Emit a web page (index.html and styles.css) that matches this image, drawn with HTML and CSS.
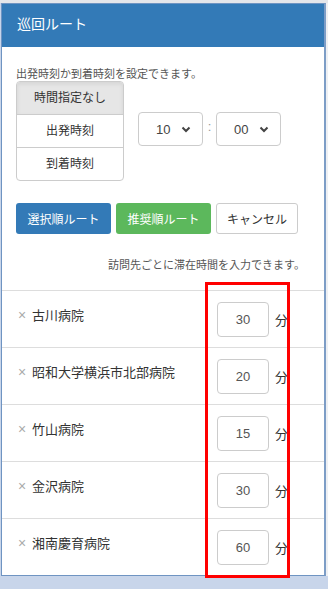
FILE: index.html
```html
<!DOCTYPE html>
<html lang="ja">
<head>
  <meta charset="UTF-8">
  <meta name="viewport" content="width=device-width, initial-scale=1.0">
  <title>巡回ルート</title>
  <link rel="stylesheet" href="styles.css">
</head>
<body>
  <div class="pantalla">
    <div class="panel">
      <div class="cabecera">巡回ルート</div>
      <div class="cuerpo">
        <p class="ayuda">出発時刻か到着時刻を設定できます。</p>
        <div class="fila-hora">
          <div class="grupo">
            <div class="opcion activa">時間指定なし</div>
            <div class="opcion">出発時刻</div>
            <div class="opcion">到着時刻</div>
          </div>
          <div class="selector">
            <span>10</span>
            <svg width="10" height="7" viewBox="0 0 10 7"><path d="M1.5 1.5 L5 5 L8.5 1.5" fill="none" stroke="#444" stroke-width="2"/></svg>
          </div>
          <span class="dos-puntos">:</span>
          <div class="selector">
            <span>00</span>
            <svg width="10" height="7" viewBox="0 0 10 7"><path d="M1.5 1.5 L5 5 L8.5 1.5" fill="none" stroke="#444" stroke-width="2"/></svg>
          </div>
        </div>
        <div class="botones">
          <button class="azul">選択順ルート</button>
          <button class="verde">推奨順ルート</button>
          <button class="blanco">キャンセル</button>
        </div>
        <p class="nota">訪問先ごとに滞在時間を入力できます。</p>
      </div>
      <ul class="lista">
        <li><span class="nombre"><span class="quitar">×</span>古川病院</span><span class="caja">30</span><span class="min">分</span></li>
        <li><span class="nombre"><span class="quitar">×</span>昭和大学横浜市北部病院</span><span class="caja">20</span><span class="min">分</span></li>
        <li><span class="nombre"><span class="quitar">×</span>竹山病院</span><span class="caja">15</span><span class="min">分</span></li>
        <li><span class="nombre"><span class="quitar">×</span>金沢病院</span><span class="caja">30</span><span class="min">分</span></li>
        <li><span class="nombre"><span class="quitar">×</span>湘南慶育病院</span><span class="caja">60</span><span class="min">分</span></li>
      </ul>
    </div>
    <div class="marco-rojo"></div>
  </div>
</body>
</html>
```

FILE: styles.css
```css
body {
  margin: 0;
  font-family: "Liberation Sans", "Noto Sans CJK JP", sans-serif;
  background: #c8d5ea;
}
.pantalla {
  position: relative;
  width: 328px;
  height: 589px;
  overflow: hidden;
  background: linear-gradient(to bottom, #e4e6ea 0, #e4e6ea 3px, #c8d5ea 3px);
}
.panel {
  margin: 3px 0 0 1px;
  width: 322px;
  background: #fff;
  border: 1px solid #6f94c2;
  border-right: 2px solid #7d9dc6;
  box-shadow: 2px 0 0 #eef0f3;
}
.cabecera {
  height: 43px;
  line-height: 40px;
  padding-left: 15px;
  background: #337ab7;
  color: #fff;
  font-size: 14px;
}
.cuerpo {
  padding: 19px 0 0 14px;
}
.ayuda {
  margin: 0;
  font-size: 11px;
  line-height: 16px;
  color: #555;
}
.fila-hora {
  display: flex;
  align-items: flex-start;
  margin-top: -1px;
}
.grupo {
  width: 106px;
  border: 1px solid #ccc;
  border-radius: 4px;
  overflow: hidden;
}
.opcion {
  height: 32px;
  line-height: 32px;
  text-align: center;
  font-size: 12px;
  color: #333;
  border-top: 1px solid #ccc;
}
.opcion:first-child {
  border-top: none;
}
.opcion.activa {
  background: #e6e6e6;
  box-shadow: inset 0 2px 4px rgba(0,0,0,0.08);
}
.selector {
  display: flex;
  align-items: center;
  justify-content: space-between;
  width: 65px;
  height: 34px;
  margin-top: 31px;
  padding: 0 11px 0 17px;
  box-sizing: border-box;
  border: 1px solid #ccc;
  border-radius: 4px;
  font-size: 13px;
  color: #444;
}
.fila-hora .grupo + .selector {
  margin-left: 14px;
}
.dos-puntos {
  width: 13px;
  margin-top: 38px;
  text-align: center;
  font-size: 13px;
  color: #999;
}
.botones {
  display: flex;
  gap: 5px;
  margin-top: 22px;
}
.botones button {
  height: 31px;
  padding: 0 10px;
  border-radius: 3px;
  border: 1px solid transparent;
  font-family: inherit;
  font-size: 12px;
  color: #fff;
}
.azul {
  width: 95px;
  background: #337ab7;
  border-color: #2e6da4;
}
.verde {
  width: 95px;
  background: #5cb85c;
  border-color: #4cae4c;
}
.botones .blanco {
  width: 82px;
  background: #fff;
  border-color: #ccc;
  color: #333;
}
.nota {
  margin: 23px 0 0;
  padding-right: 19px;
  text-align: right;
  font-size: 11px;
  line-height: 16px;
  color: #555;
}
.lista {
  list-style: none;
  margin: 17px 0 0;
  padding: 0;
}
.lista li {
  display: flex;
  align-items: flex-start;
  height: 56px;
  border-top: 1px solid #ddd;
}
.nombre {
  flex: 1;
  padding: 15px 0 0 16px;
  font-size: 13px;
  line-height: 18px;
  color: #333;
}
.quitar {
  display: inline-block;
  width: 14px;
  color: #aaa;
  font-size: 14px;
}
.caja {
  width: 50px;
  height: 33px;
  margin-top: 11px;
  line-height: 33px;
  text-align: center;
  border: 1px solid #ccc;
  border-radius: 4px;
  font-size: 13px;
  color: #555;
}
.min {
  width: 55px;
  padding: 21px 0 0 6px;
  box-sizing: border-box;
  font-size: 13px;
  line-height: 18px;
  color: #333;
}
.marco-rojo {
  position: absolute;
  left: 205px;
  top: 282px;
  width: 79px;
  height: 290px;
  border: 3px solid #f00;
}
```
